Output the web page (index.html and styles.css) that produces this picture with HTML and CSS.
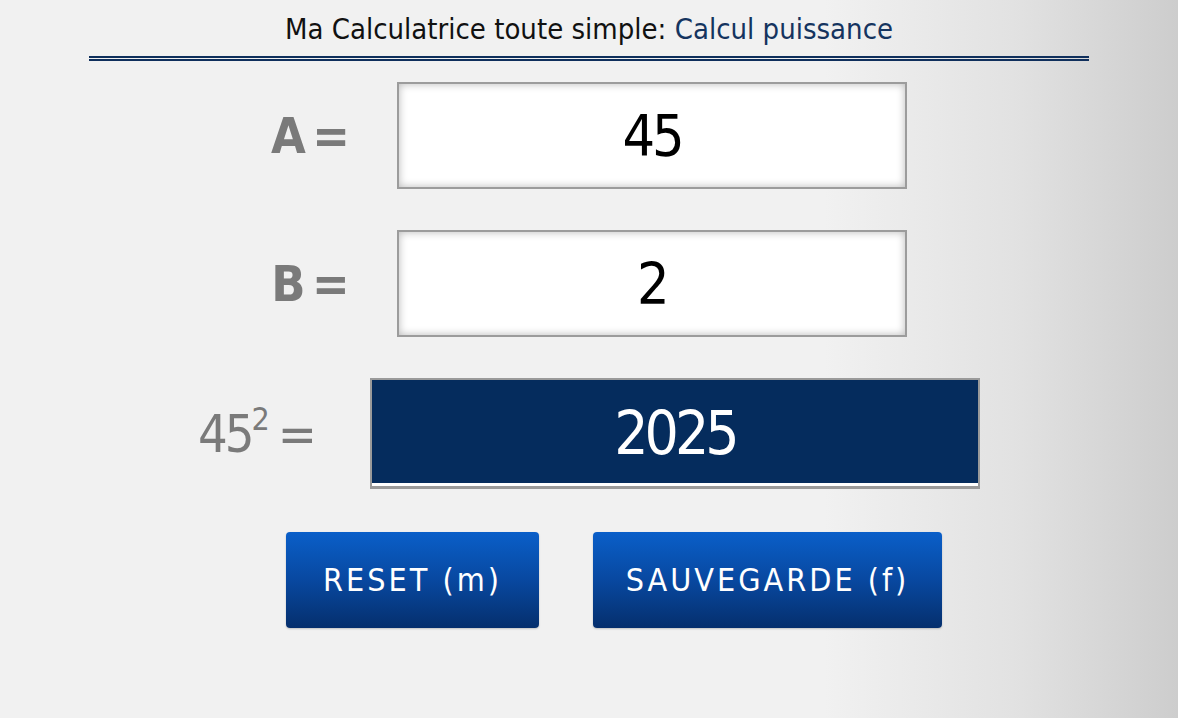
FILE: index.html
```html
<!DOCTYPE html>
<html lang="fr">
<head>
<meta charset="utf-8">
<title>Calcul puissance</title>
<link rel="stylesheet" href="styles.css">
</head>
<body>
<div class="page">
  <header class="header">
    <h1 class="title">Ma Calculatrice toute simple: <span class="title-accent">Calcul puissance</span></h1>
  </header>
  <main class="calc">
    <div class="row row-input">
      <label class="label label-bold">A =</label>
      <div class="field">45</div>
    </div>
    <div class="row row-input">
      <label class="label label-bold">B =</label>
      <div class="field">2</div>
    </div>
    <div class="row">
      <label class="label label-result">45<sup class="exp">2</sup> =</label>
      <div class="result">2025</div>
    </div>
    <div class="actions">
      <button class="btn btn-reset">RESET (m)</button>
      <button class="btn btn-save">SAUVEGARDE (f)</button>
    </div>
  </main>
</div>
</body>
</html>
```

FILE: styles.css
```css
html, body {
  margin: 0;
  padding: 0;
  height: 100%;
}
body {
  background: linear-gradient(to right, #f1f1f1 0%, #f1f1f1 70%, #e2e2e2 86%, #cdcdcd 100%);
  font-family: "Liberation Sans Narrow", "DejaVu Sans Condensed", "Liberation Sans", sans-serif;
  min-height: 718px;
}
.page {
  width: 1000px;
  margin: 0 auto;
}
.header {
  border-bottom: 5px double #0f2f5c;
  padding-top: 8px;
  height: 48px;
  box-sizing: content-box;
}
.title {
  margin: 0;
  text-align: center;
  font-size: 29px;
  font-weight: normal;
  color: #111;
  line-height: 42px;
  letter-spacing: 0;
}
.title-accent {
  color: #15345f;
}
.calc {
  display: flex;
  flex-direction: column;
  align-items: center;
  padding-top: 21px;
}
.row {
  display: flex;
  align-items: center;
  gap: 56px;
  margin-bottom: 41px;
}
.row-input {
  gap: 50px;
}
.label {
  color: #7a7a7a;
  font-size: 52px;
  line-height: 1;
  white-space: nowrap;
  letter-spacing: -3px;
  word-spacing: -6px;
}
.label-bold {
  font-weight: bold;
  font-size: 50px;
  word-spacing: -3px;
}
.label-result {
  letter-spacing: -3px;
  word-spacing: -4px;
}
.exp {
  font-size: 32px;
  vertical-align: top;
  position: relative;
  top: -5px;
  line-height: 1;
  letter-spacing: 0;
}
.field {
  width: 506px;
  height: 103px;
  border: 2px solid #9c9c9c;
  background: #fff;
  box-shadow: inset 0 0 9px rgba(0, 0, 0, 0.28);
  display: flex;
  align-items: center;
  justify-content: center;
  font-size: 57px;
  letter-spacing: -3px;
  color: #000;
}
.result {
  width: 606px;
  height: 106px;
  border: 2px solid #9a9a9a;
  border-bottom-width: 3px;
  background: #052c5d;
  box-shadow: inset 0 -3px 0 #ffffff;
  display: flex;
  align-items: center;
  justify-content: center;
  font-size: 60px;
  letter-spacing: -4px;
  color: #fff;
}
.actions {
  display: flex;
  gap: 54px;
  margin-left: 50px;
  margin-top: 2px;
}
.btn {
  height: 96px;
  border: none;
  border-radius: 4px;
  background: linear-gradient(to bottom, #0a5fc9 0%, #0848a0 50%, #052f6d 100%);
  color: #fff;
  font-family: "Liberation Sans Narrow", "DejaVu Sans Condensed", "Liberation Sans", sans-serif;
  font-size: 32px;
  letter-spacing: 3px;
  box-shadow: 0 1px 2px rgba(0, 0, 0, 0.2);
  padding: 0;
}
.btn-reset {
  width: 253px;
}
.btn-save {
  width: 349px;
}
```
